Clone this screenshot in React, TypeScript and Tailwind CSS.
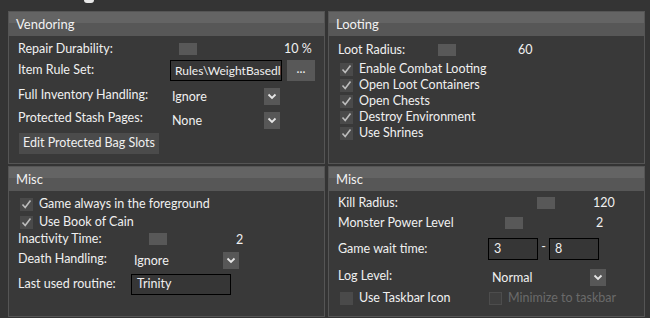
import React from "react";

const font = { fontFamily: "Lato, 'Noto Sans', sans-serif" };

function Panel({ title, children }: { title: string; children: React.ReactNode }) {
  return (
    <div className="flex flex-col border border-[#555555] bg-[#393939] h-full">
      <div className="h-[24px] flex flex-col">
        <div className="h-[11px] bg-[#646464]" />
        <div className="h-[13px] bg-[#575757]" />
      </div>
      <div className="-mt-[24px] h-[24px] flex items-center pl-[7px] text-[#f2f2f2] text-[13px]">{title}</div>
      <div className="flex flex-col pl-[9px]">{children}</div>
    </div>
  );
}

function Thumb() {
  return <div className="w-[18px] h-[12px] bg-[#585858]" />;
}

function Arrow() {
  return (
    <div className="w-[16px] h-[17px] bg-[#575757] flex items-center justify-center">
      <svg width="10" height="7" viewBox="0 0 10 7">
        <polyline points="1.5,1.5 5,5 8.5,1.5" fill="none" stroke="#e6e6e6" strokeWidth="1.8" />
      </svg>
    </div>
  );
}

function Check({ checked = true, disabled = false }: { checked?: boolean; disabled?: boolean }) {
  return (
    <div className={`w-[13px] h-[13px] flex items-center justify-center ${disabled ? "bg-[#3f3f3f] border border-[#4d4d4d]" : "bg-[#4a4a4a]"}`}>
      {checked && (
        <svg width="11" height="11" viewBox="0 0 11 11">
          <polyline points="1.5,5.5 4.2,8.5 9.5,1.5" fill="none" stroke="#bdbdbd" strokeWidth="1.6" />
        </svg>
      )}
    </div>
  );
}

function CheckRow({ label }: { label: string }) {
  return (
    <div className="h-[16px] flex items-center pl-[2px]">
      <Check />
      <span className="ml-[6px]">{label}</span>
    </div>
  );
}

export default function App() {
  return (
    <div className="w-[650px] h-[318px] bg-[#343434] text-[#f0f0f0] text-[12.5px] leading-none overflow-hidden" style={font}>
      <div className="h-[11px] pl-[84px]">
        <div className="w-[10px] h-[3px] rounded-b-full bg-[#e8e8e8]" />
      </div>
      <div className="grid grid-cols-[317px_317px] grid-rows-[153px_151px] gap-x-[3px] gap-y-[2px] pl-[8px]">
        <Panel title="Vendoring">
          <div className="mt-[5px] h-[16px] flex items-center">
            <span className="w-[161px]">Repair Durability:</span>
            <Thumb />
            <span className="ml-[87px]">10 %</span>
          </div>
          <div className="mt-[3px] h-[21px] flex items-center">
            <span className="w-[152px]">Item Rule Set:</span>
            <div className="w-[112px] h-[21px] border border-black bg-[#363636] flex items-center pl-[4px] text-[12px] whitespace-nowrap">
              Rules\WeightBasedl
            </div>
            <div className="ml-[5px] w-[28px] h-[21px] bg-[#585858] flex items-center justify-center pb-[3px]">...</div>
          </div>
          <div className="mt-[7px] h-[17px] flex items-center">
            <span className="w-[154px] -mt-[2px]">Full Inventory Handling:</span>
            <span className="w-[92px] mt-[2px]">Ignore</span>
            <Arrow />
          </div>
          <div className="mt-[7px] h-[17px] flex items-center">
            <span className="w-[154px] -mt-[4px]">Protected Stash Pages:</span>
            <span className="w-[92px] mt-[1px]">None</span>
            <Arrow />
          </div>
          <div className="mt-[4px] ml-[1px] w-[140px] h-[21px] bg-[#4b4b4b] flex items-center justify-center">
            Edit Protected Bag Slots
          </div>
        </Panel>
        <Panel title="Looting">
          <div className="mt-[6px] h-[16px] flex items-center">
            <span className="w-[100px]">Loot Radius:</span>
            <Thumb />
            <span className="ml-[62px]">60</span>
          </div>
          <div className="mt-[3px] flex flex-col">
            <CheckRow label="Enable Combat Looting" />
            <CheckRow label="Open Loot Containers" />
            <CheckRow label="Open Chests" />
            <CheckRow label="Destroy Environment" />
            <CheckRow label="Use Shrines" />
          </div>
        </Panel>
        <Panel title="Misc">
          <div className="mt-[5px] flex flex-col gap-[2px]">
            <CheckRow label="Game always in the foreground" />
            <CheckRow label="Use Book of Cain" />
          </div>
          <div className="mt-[1px] h-[16px] flex items-center">
            <span className="w-[131px]">Inactivity Time:</span>
            <Thumb />
            <span className="ml-[69px] mt-[3px]">2</span>
          </div>
          <div className="mt-[4px] h-[18px] flex items-center">
            <span className="w-[116px] -mt-[2px]">Death Handling:</span>
            <span className="w-[89px] mt-[2px]">Ignore</span>
            <Arrow />
          </div>
          <div className="mt-[5px] h-[21px] flex items-center">
            <span className="w-[113px]">Last used routine:</span>
            <div className="w-[100px] h-[21px] border border-black bg-[#363636] flex items-center pl-[5px]">Trinity</div>
          </div>
        </Panel>
        <Panel title="Misc">
          <div className="mt-[6px] h-[12px] flex items-center">
            <span className="w-[199px]">Kill Radius:</span>
            <Thumb />
            <span className="ml-[38px]">120</span>
          </div>
          <div className="mt-[8px] h-[12px] flex items-center">
            <span className="w-[167px]">Monster Power Level</span>
            <Thumb />
            <span className="ml-[73px]">2</span>
          </div>
          <div className="mt-[9px] h-[22px] flex items-center">
            <span className="w-[150px]">Game wait time:</span>
            <div className="w-[50px] h-[22px] border border-black bg-[#363636] flex items-center pl-[5px]">3</div>
            <span className="w-[11px] text-center -mt-[4px]">-</span>
            <div className="w-[50px] h-[22px] border border-black bg-[#363636] flex items-center pl-[5px]">8</div>
          </div>
          <div className="mt-[9px] h-[17px] flex items-center">
            <span className="w-[154px] -mt-[2px]">Log Level:</span>
            <span className="w-[98px] mt-[2px]">Normal</span>
            <Arrow />
          </div>
          <div className="mt-[6px] h-[13px] flex items-center">
            <div className="w-[151px] flex items-center pl-[2px]">
              <Check checked={false} />
              <span className="ml-[6px]">Use Taskbar Icon</span>
            </div>
            <Check checked={false} disabled />
            <span className="ml-[6px] text-[#6a6a6a]">Minimize to taskbar</span>
          </div>
        </Panel>
      </div>
    </div>
  );
}
